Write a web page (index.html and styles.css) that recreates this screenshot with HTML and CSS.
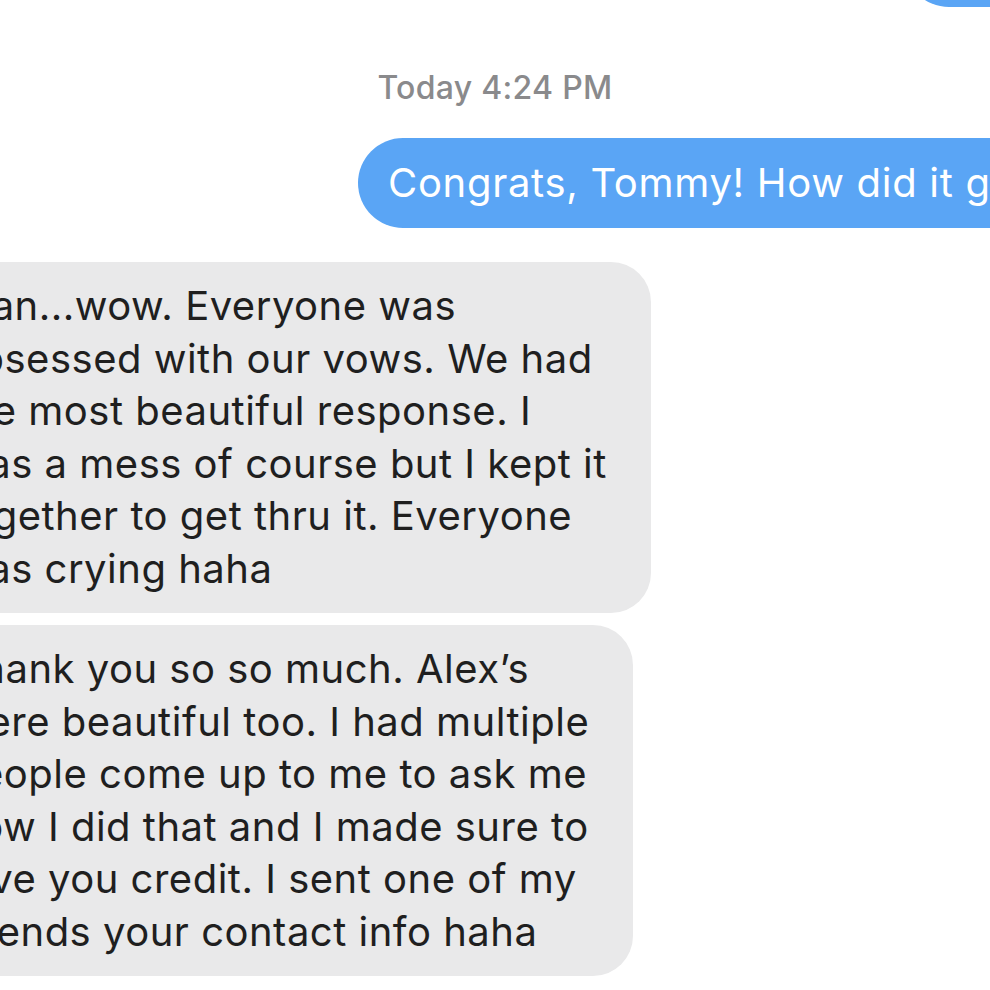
FILE: index.html
```html
<!DOCTYPE html>
<html lang="en">
<head>
<meta charset="utf-8">
<title>Messages</title>
<link rel="stylesheet" href="styles.css">
</head>
<body>
<div class="thread">
  <div class="bubble sent prev">Thank you!</div>
  <div class="stamp">Today 4:24 PM</div>
  <div class="bubble sent first">Congrats, Tommy! How did it go?</div>
  <div class="bubble recv">
    <span class="line">Man...wow. Everyone was</span>
    <span class="line">obsessed with our vows. We had</span>
    <span class="line">the most beautiful response. I</span>
    <span class="line">was a mess of course but I kept it</span>
    <span class="line">together to get thru it. Everyone</span>
    <span class="line">was crying haha</span>
  </div>
  <div class="bubble recv">
    <span class="line">Thank you so so much. Alex’s</span>
    <span class="line">were beautiful too. I had multiple</span>
    <span class="line">people come up to me to ask me</span>
    <span class="line">how I did that and I made sure to</span>
    <span class="line">give you credit. I sent one of my</span>
    <span class="line">friends your contact info haha</span>
  </div>
</div>
</body>
</html>
```
FILE: styles.css
```css
html, body {
  margin: 0;
  padding: 0;
  background: #ffffff;
}

.thread {
  width: 990px;
  height: 990px;
  overflow: hidden;
  display: flex;
  flex-direction: column;
  font-family: Inter, "Liberation Sans", sans-serif;
  font-size: 40px;
  letter-spacing: 0.5px;
  color: #1f1f1f;
}

.bubble {
  white-space: nowrap;
  box-sizing: border-box;
  flex: none;
}

.sent {
  background: #5aa5f5;
  color: #ffffff;
  height: 90px;
  line-height: 90px;
  border-radius: 45px;
  padding: 0 60px 0 30px;
  align-self: flex-start;
}

.prev {
  margin-top: -83px;
  margin-left: 904px;
}

.first {
  margin-top: 32px;
  margin-left: 358px;
  letter-spacing: 0.7px;
}

.stamp {
  margin-top: 63px;
  height: 36px;
  line-height: 36px;
  text-align: center;
  font-size: 32px;
  font-weight: 500;
  letter-spacing: 0.3px;
  color: #8a8a8c;
}

.recv {
  align-self: flex-start;
  background: #e9e9ea;
  border-radius: 40px;
  padding: 18px 44px 18px 30px;
  margin-left: -75px;
  line-height: 52.5px;
  margin-top: 12px;
}

.stamp + .first + .recv {
  margin-top: 34px;
}

.line {
  display: block;
}
```
